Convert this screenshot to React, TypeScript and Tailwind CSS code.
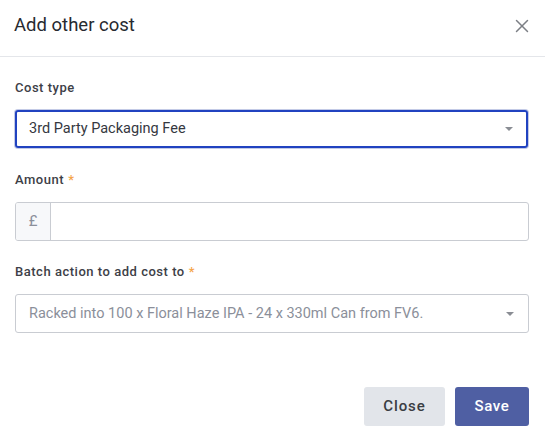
import { X } from 'lucide-react'

function Caret() {
  return (
    <svg width="8" height="4" viewBox="0 0 8 4" className="shrink-0">
      <path d="M0 0 L8 0 L4 4 Z" fill="#8a8d94" />
    </svg>
  )
}

function Label({ children, required }: { children: string; required?: boolean }) {
  return (
    <div className="h-[18px] flex items-center text-[13px] font-medium tracking-[0.04em] text-[#3d4047]">
      {children}
      {required && <span className="ml-1 text-[#f5a54a]">*</span>}
    </div>
  )
}

export default function App() {
  return (
    <div className="w-[545px] h-[442px] bg-white font-['Roboto',sans-serif] flex flex-col">
      {/* Header */}
      <div className="h-[57px] shrink-0 flex items-center justify-between pl-[14px] pr-[12px] border-b border-[#e4e6ea]">
        <h1 className="text-[18.5px] text-[#272a30] -mt-[5px]">Add other cost</h1>
        <button className="text-[#7c7f85] -mt-[5px]">
          <X className="w-[22px] h-[22px]" strokeWidth={1.6} />
        </button>
      </div>

      {/* Body */}
      <div className="px-[15px] pt-[22px] flex flex-col">
        <Label>Cost type</Label>
        <div className="mt-[13px] mr-[2px] h-[38px] rounded-[3px] ring-1 ring-[#c3cae6]">
          <div className="h-full rounded-[3px] border-2 border-[#2143c0] flex items-center justify-between pl-[12px] pr-[13px] text-[14.5px] text-[#35383f]">
            <span>3rd Party Packaging Fee</span>
            <Caret />
          </div>
        </div>

        <div className="mt-[23px]">
          <Label required>Amount</Label>
        </div>
        <div className="mt-[13px] mr-[1px] h-[39px] rounded-[3px] border border-[#c9ccd2] flex overflow-hidden">
          <div className="w-[35px] shrink-0 bg-[#f7f8fa] border-r border-[#c9ccd2] flex items-center justify-center text-[15px] text-[#8b8f9a]">
            £
          </div>
          <input className="flex-1 outline-none px-3 text-[14px]" />
        </div>

        <div className="mt-[22px]">
          <Label required>Batch action to add cost to</Label>
        </div>
        <div className="mt-[13px] mr-[1px] h-[39px] rounded-[3px] border border-[#c9ccd2] flex items-center justify-between pl-[13px] pr-[14px] text-[14.5px] text-[#8b8f9a]">
          <span>Racked into 100 x Floral Haze IPA - 24 x 330ml Can from FV6.</span>
          <Caret />
        </div>
      </div>

      {/* Footer */}
      <div className="mt-[54px] flex justify-end gap-[10px] pr-[16px]">
        <button className="w-[81px] h-[39px] rounded-[3px] bg-[#e2e5ea] text-[15px] font-medium tracking-[0.06em] text-[#3a3d43]">
          Close
        </button>
        <button className="w-[74px] h-[39px] rounded-[3px] bg-[#4f5fa3] text-[15px] font-medium tracking-[0.04em] text-white">
          Save
        </button>
      </div>
    </div>
  )
}
